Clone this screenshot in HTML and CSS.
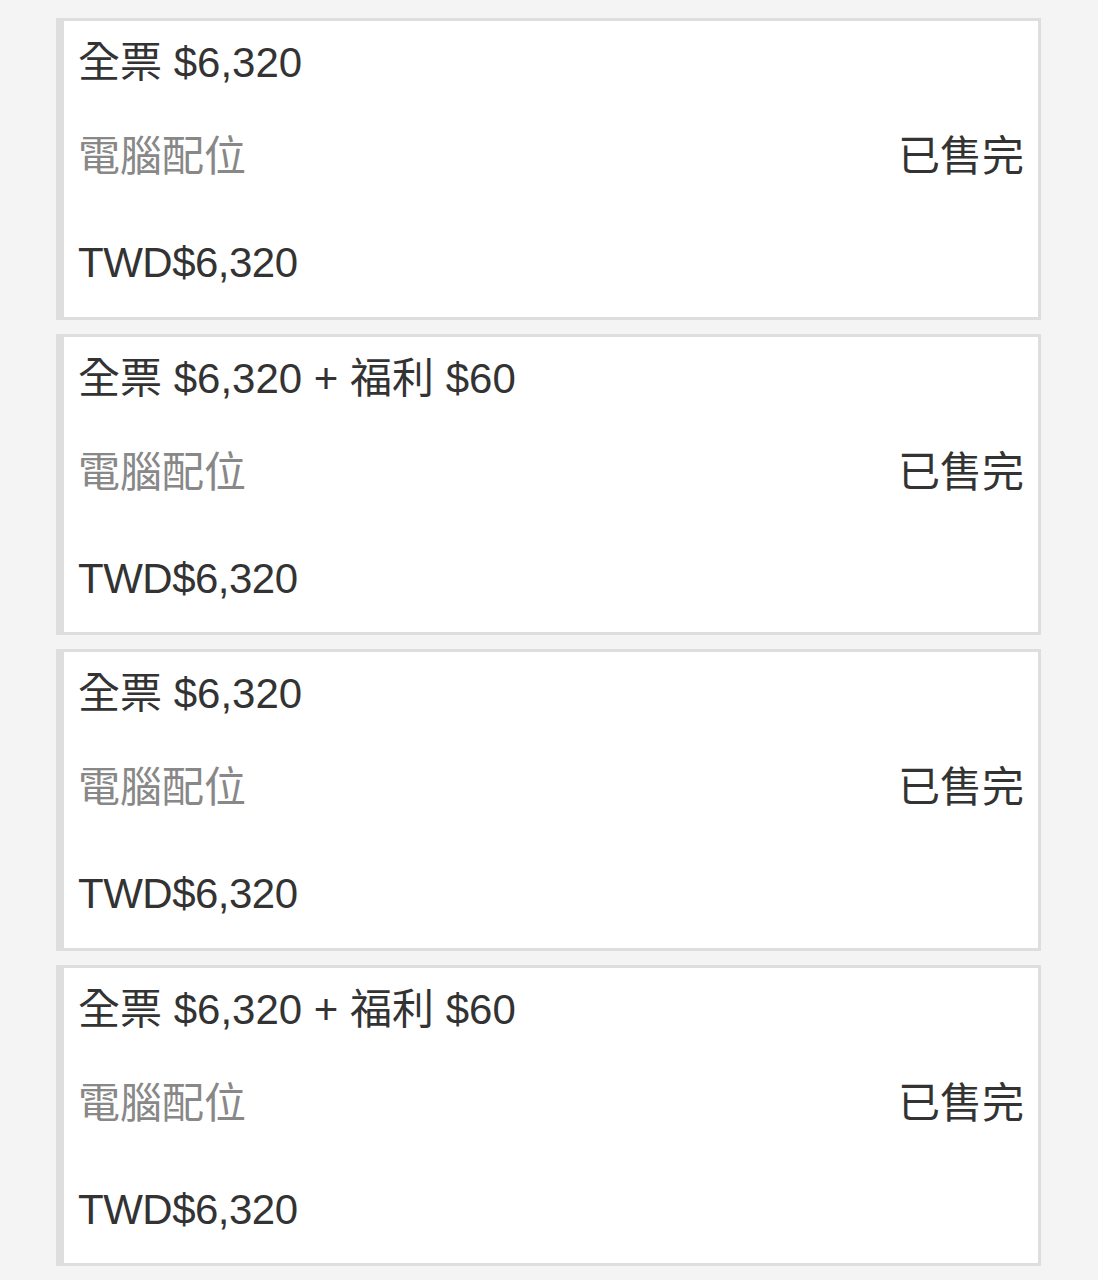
FILE: index.html
```html
<!DOCTYPE html>
<html lang="zh-Hant">
<head>
  <meta charset="UTF-8" />
  <meta name="viewport" content="width=device-width, initial-scale=1.0"/>
  <title>票種</title>
  <link rel="stylesheet" href="styles.css">
</head>
<body>
  <div class="list">
    <div class="ticket">
      <div class="name">全票 $6,320</div>
      <div class="row">
        <span class="seat">電腦配位</span>
        <span class="status">已售完</span>
      </div>
      <div class="price">TWD$6,320</div>
    </div>

    <div class="ticket">
      <div class="name">全票 $6,320 + 福利 $60</div>
      <div class="row">
        <span class="seat">電腦配位</span>
        <span class="status">已售完</span>
      </div>
      <div class="price">TWD$6,320</div>
    </div>

    <div class="ticket">
      <div class="name">全票 $6,320</div>
      <div class="row">
        <span class="seat">電腦配位</span>
        <span class="status">已售完</span>
      </div>
      <div class="price">TWD$6,320</div>
    </div>

    <div class="ticket">
      <div class="name">全票 $6,320 + 福利 $60</div>
      <div class="row">
        <span class="seat">電腦配位</span>
        <span class="status">已售完</span>
      </div>
      <div class="price">TWD$6,320</div>
    </div>
  </div>
</body>
</html>
```

FILE: styles.css
```css
* {
  box-sizing: border-box;
}

body {
  margin: 0;
  background: #f4f4f4;
  font-family: "Liberation Sans", "Noto Sans CJK TC", sans-serif;
  color: #333;
}

.list {
  display: flex;
  flex-direction: column;
  gap: 14px;
  padding: 18px 57px 0 56px;
}

.ticket {
  background: #fff;
  border: 3px solid #dedede;
  border-left-width: 8px;
  height: 301.5px;
  padding: 18px 14px 0 14px;
  font-size: 42px;
}

.name {
  line-height: 48px;
}

.row {
  display: flex;
  justify-content: space-between;
  margin-top: 46px;
  line-height: 48px;
}

.seat {
  color: #888;
}

.status {
  color: #333;
}

.price {
  margin-top: 58px;
  line-height: 48px;
  letter-spacing: -0.5px;
}
```
